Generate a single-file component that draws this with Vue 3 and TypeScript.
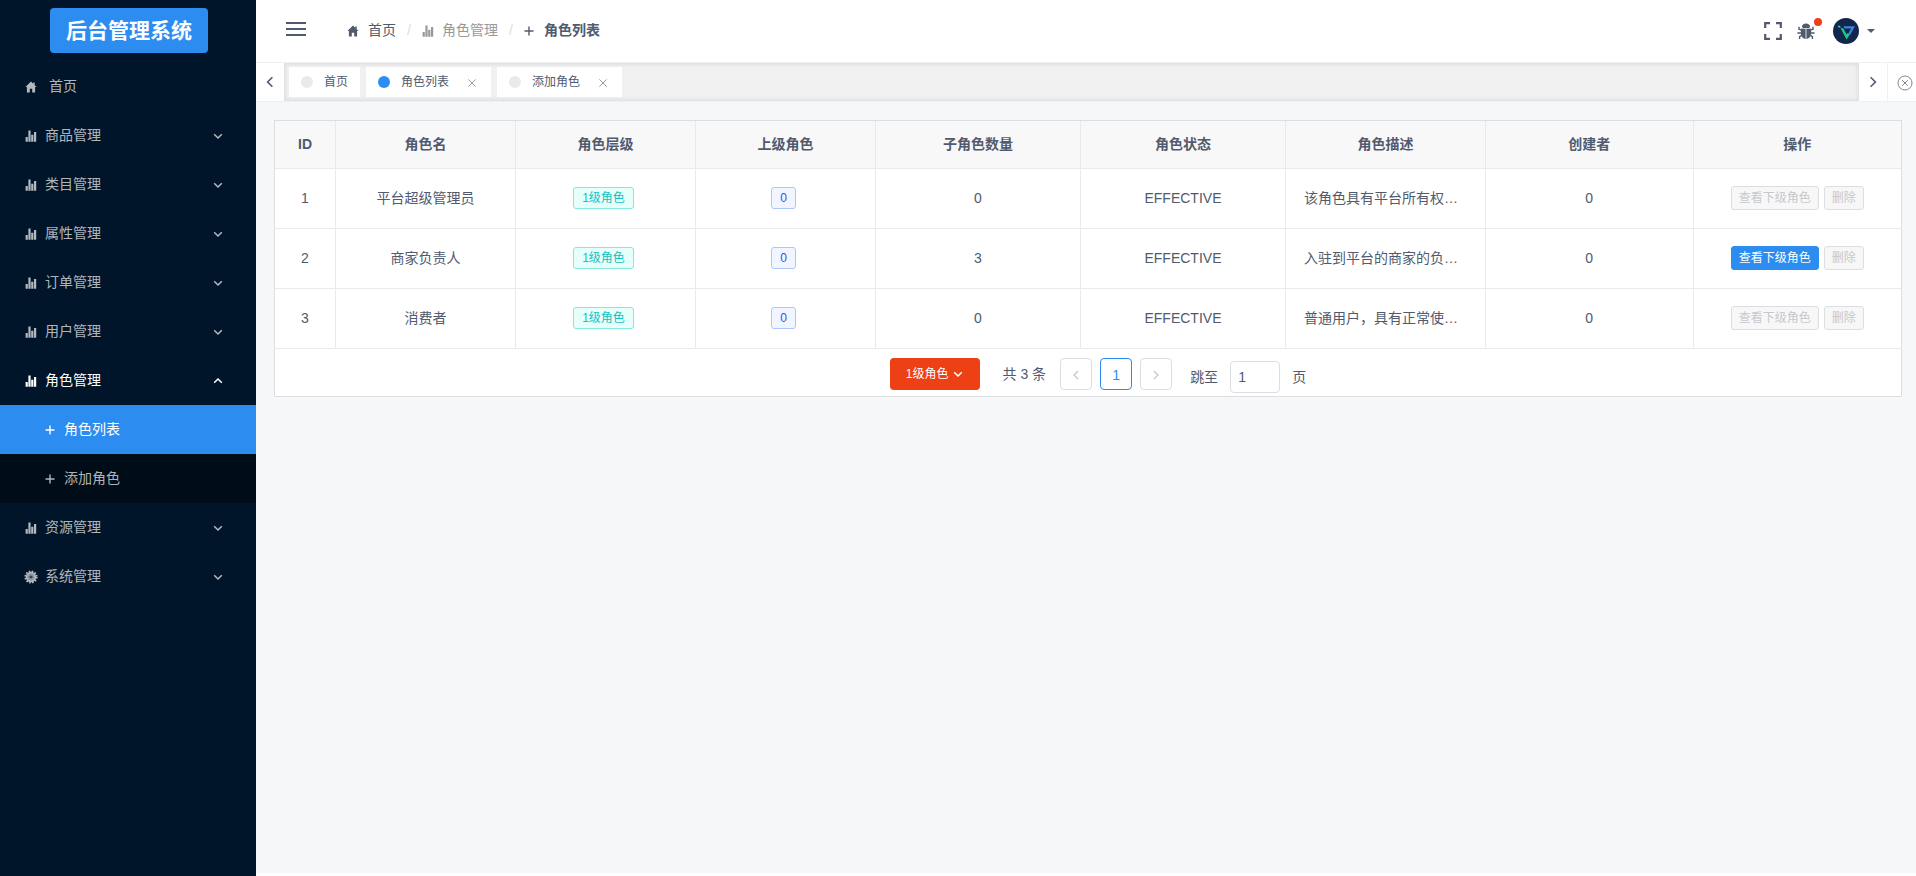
<script setup lang="ts">
import { ref } from 'vue'

interface MenuItem {
  label: string
  icon: 'chart' | 'gear'
  open?: boolean
  children?: string[]
}

interface Role {
  id: number
  name: string
  level: string
  parent: number
  children: number
  status: string
  description: string
  creator: number
}

const menu: MenuItem[] = [
  { label: '商品管理', icon: 'chart' },
  { label: '类目管理', icon: 'chart' },
  { label: '属性管理', icon: 'chart' },
  { label: '订单管理', icon: 'chart' },
  { label: '用户管理', icon: 'chart' },
  { label: '角色管理', icon: 'chart', open: true, children: ['角色列表', '添加角色'] },
  { label: '资源管理', icon: 'chart' },
  { label: '系统管理', icon: 'gear' },
]

const tabs = [
  { label: '首页', closable: false },
  { label: '角色列表', closable: true },
  { label: '添加角色', closable: true },
]
const current = ref('角色列表')

const columns = ['ID', '角色名', '角色层级', '上级角色', '子角色数量', '角色状态', '角色描述', '创建者', '操作']

const roles: Role[] = [
  { id: 1, name: '平台超级管理员', level: '1级角色', parent: 0, children: 0, status: 'EFFECTIVE', description: '该角色具有平台所有权…', creator: 0 },
  { id: 2, name: '商家负责人', level: '1级角色', parent: 0, children: 3, status: 'EFFECTIVE', description: '入驻到平台的商家的负…', creator: 0 },
  { id: 3, name: '消费者', level: '1级角色', parent: 0, children: 0, status: 'EFFECTIVE', description: '普通用户，具有正常使…', creator: 0 },
]

const page = ref('1')
</script>

<template>
  <svg class="defs" aria-hidden="true">
    <symbol id="i-home" viewBox="0 0 12 12">
      <path d="M6 .6 .4 6.1h1.5v5.3h2.9V7.8h2.4v3.6h2.9V6.1h1.5L9.7 4.2V1.4H8.3v1.4z" />
    </symbol>
    <symbol id="i-chart" viewBox="0 0 12 12">
      <path d="M.6 7h2.2v4.800H.6zM3.400.4h2.200v11.400H3.400zM6.200 4.800h2.200v7H6.200zM9 2h2.200v9.800H9z" />
    </symbol>
    <symbol id="i-gear" viewBox="0 0 14 14">
      <circle cx="7" cy="7" r="5.2" />
      <circle cx="7" cy="7" r="5.8" fill="none" stroke="currentColor" stroke-width="1.6" stroke-dasharray="1.6 1.44" />
      <path d="M7 3.2v7.6M3.4 5.8l7.2 2.4M4.8 10.1l4.4-6.2M4.8 3.9l4.4 6.2M3.4 8.2l7.2-2.4" stroke="#001529" stroke-width=".6" fill="none" opacity=".7" />
    </symbol>
    <symbol id="i-plus" viewBox="0 0 10 10">
      <path d="M5 .5v9M.5 5h9" fill="none" stroke="currentColor" stroke-width="1.4" />
    </symbol>
    <symbol id="i-down" viewBox="0 0 10 10">
      <path d="M1.2 3.2 5 7l3.8-3.8" fill="none" stroke="currentColor" stroke-width="1.5" />
    </symbol>
    <symbol id="i-left" viewBox="0 0 12 12">
      <path d="M8.4 1.2 3.6 6l4.8 4.8" fill="none" stroke="currentColor" stroke-width="1.6" />
    </symbol>
    <symbol id="i-cross" viewBox="0 0 10 10">
      <path d="m1.4 1.4 7.2 7.2m0-7.2-7.2 7.2" fill="none" stroke="currentColor" stroke-width="1" />
    </symbol>
  </svg>

  <div class="app">
    <aside class="sidebar">
      <h1 class="brand">后台管理系统</h1>
      <nav>
        <a class="item home" href="#"><svg class="ico"><use href="#i-home" /></svg><span>首页</span></a>
        <template v-for="m in menu" :key="m.label">
          <button class="item" :class="{ open: m.open }" type="button">
            <svg class="ico" :class="m.icon"><use :href="'#i-' + m.icon" /></svg>
            <span>{{ m.label }}</span>
            <svg class="arrow"><use href="#i-down" /></svg>
          </button>
          <div v-if="m.children" class="submenu">
            <a v-for="c in m.children" :key="c" class="item sub" :class="{ active: c === current }" href="#">
              <svg class="plus"><use href="#i-plus" /></svg><span>{{ c }}</span>
            </a>
          </div>
        </template>
      </nav>
    </aside>

    <div class="page">
      <header class="header">
        <button class="burger" type="button" aria-label="菜单">
          <svg viewBox="0 0 20 14"><path d="M0 1h20M0 7h20M0 13h20" stroke="currentColor" stroke-width="1.8" /></svg>
        </button>
        <nav class="crumbs">
          <a href="#"><svg class="ico"><use href="#i-home" /></svg><span class="first">首页</span></a>
          <i>/</i>
          <span class="muted"><svg class="ico"><use href="#i-chart" /></svg><span>角色管理</span></span>
          <i>/</i>
          <strong><svg class="plus"><use href="#i-plus" /></svg><span>角色列表</span></strong>
        </nav>
        <div class="tools">
          <button type="button" aria-label="全屏" class="full">
            <svg viewBox="0 0 18 18"><path d="M1.2 6V1.2H6M12 1.2h4.8V6M16.8 12v4.8H12M6 16.8H1.2V12" fill="none" stroke="currentColor" stroke-width="2.2" /></svg>
          </button>
          <button type="button" aria-label="错误日志" class="bug">
            <svg viewBox="0 0 18 18">
              <path d="M4.800 5C5 2.700 6.600 1.400 9 1.400s4 1.300 4.200 3.600L11.600 6.200H6.400z" />
              <path d="M4.200 6.400 8.600 7v10C5.500 16.600 3.800 14 3.800 11c0-1.700.1-3.200.4-4.600zM13.800 6.400 9.400 7v10c3.100-.4 4.800-3 4.800-6 0-1.700-.1-3.200-.4-4.600z" />
              <path d="M4.600 8.200 2 7.200V4.800M4 11H.4M4.600 13.400l-2 1.200V17M13.400 8.200 16 7.200V4.800M14 11h3.600M13.400 13.400l2 1.200V17" fill="none" stroke="currentColor" stroke-width="1.4" />
            </svg>
            <span class="dot"></span>
          </button>
          <button type="button" aria-label="用户" class="user">
            <svg class="avatar" viewBox="0 0 26 26">
              <circle cx="13" cy="13" r="13" fill="#13264b" />
              <path d="M10.400 8.200H22l-5.200 9.200-1.500-1.900 2.800-5.100h-6.500z" fill="#3b82e6" />
              <path d="M7.600 10.200h2.600l3.400 6.200 1.200-1.600 1.600 2.200-2.800 4.400z" fill="#1fc98f" />
              <path d="M4.600 7.800h2.200l1.200 1.800H5.600z" fill="#37d6c0" />
            </svg>
            <svg class="caret" viewBox="0 0 8 4"><path d="M0 0h8L4 4z" /></svg>
          </button>
        </div>
      </header>

      <div class="tabbar">
        <button class="edge" type="button" aria-label="向左"><svg><use href="#i-left" /></svg></button>
        <div class="tabs">
          <div v-for="t in tabs" :key="t.label" class="tab" :class="{ on: t.label === current }">
            <a href="#">{{ t.label }}</a>
            <button v-if="t.closable" type="button" aria-label="关闭"><svg><use href="#i-cross" /></svg></button>
          </div>
        </div>
        <button class="edge next" type="button" aria-label="向右"><svg><use href="#i-left" /></svg></button>
        <button class="edge closeall" type="button" aria-label="关闭标签">
          <svg viewBox="0 0 16 16"><circle cx="8" cy="8" r="7" /><path d="m5.2 5.2 5.600 5.600m0-5.600-5.600 5.600" /></svg>
        </button>
      </div>

      <main class="content">
        <section class="card">
          <table>
            <colgroup>
              <col class="w61"><col class="w180"><col class="w180"><col class="w180">
              <col class="w205"><col class="w205"><col class="w200"><col><col>
            </colgroup>
            <thead>
              <tr><th v-for="c in columns" :key="c" scope="col">{{ c }}</th></tr>
            </thead>
            <tbody>
              <tr v-for="r in roles" :key="r.id">
                <td>{{ r.id }}</td>
                <td>{{ r.name }}</td>
                <td><span class="tag cyan">{{ r.level }}</span></td>
                <td><span class="tag blue">{{ r.parent }}</span></td>
                <td>{{ r.children }}</td>
                <td>{{ r.status }}</td>
                <td class="desc">{{ r.description }}</td>
                <td>{{ r.creator }}</td>
                <td>
                  <div class="actions">
                    <button type="button" :disabled="r.children === 0">查看下级角色</button>
                    <button type="button" disabled>删除</button>
                  </div>
                </td>
              </tr>
            </tbody>
          </table>
          <footer class="pager">
            <button class="level" type="button">1级角色<svg><use href="#i-down" /></svg></button>
            <span class="total">共 3 条</span>
            <button class="num" type="button" disabled aria-label="上一页"><svg><use href="#i-left" /></svg></button>
            <button class="num cur" type="button">1</button>
            <button class="num fwd" type="button" disabled aria-label="下一页"><svg><use href="#i-left" /></svg></button>
            <label class="jump">跳至<input v-model="page" type="text">页</label>
          </footer>
        </section>
      </main>
    </div>
  </div>
</template>

<style>
body {
  margin: 0;
  background: #fff;
}
</style>

<style scoped>
* {
  box-sizing: border-box;
}
.defs {
  position: absolute;
  width: 0;
  height: 0;
}
svg {
  display: block;
  flex: none;
  fill: currentColor;
}
button {
  font: inherit;
  color: inherit;
  padding: 0;
  border: 0;
  background: none;
}
a {
  color: inherit;
  text-decoration: none;
}
.app {
  display: flex;
  min-height: 100vh;
  font-family: 'Liberation Sans', 'Noto Sans CJK SC', sans-serif;
  font-size: 14px;
  line-height: 20px;
  color: #515a6e;
}

/* sidebar */
.sidebar {
  flex: 0 0 256px;
  background: #001529;
  color: rgba(255, 255, 255, 0.7);
}
.brand {
  width: 158px;
  margin: 8px 0 9px 50px;
  border-radius: 4px;
  background: #2d8cf0;
  color: #fff;
  font-size: 21px;
  line-height: 45px;
  text-align: center;
}
.item {
  display: flex;
  align-items: center;
  gap: 8px;
  width: 100%;
  height: 49px;
  padding: 0 33px 2px 25px;
  text-align: left;
}
.item svg {
  margin-top: 2px;
}
.ico {
  width: 12px;
  height: 12px;
}
.gear {
  width: 14px;
  height: 14px;
  margin: 0 -1px;
}
.home {
  gap: 12px;
}
.item .arrow {
  width: 10px;
  height: 10px;
  margin-left: auto;
}
.open {
  color: #fff;
}
.open .arrow {
  transform: rotate(180deg);
}
.submenu {
  background: #000c17;
}
.sub {
  padding-left: 45px;
  gap: 9px;
}
.active {
  background: #2d8cf0;
  color: #fff;
}
.plus {
  width: 10px;
  height: 10px;
}

/* header */
.page {
  flex: 1;
  min-width: 0;
  display: flex;
  flex-direction: column;
}
.header {
  display: flex;
  align-items: center;
  height: 62px;
  padding: 0 41px 0 30px;
}
.burger svg {
  width: 20px;
  height: 14px;
  margin-bottom: 4px;
}
.crumbs {
  display: flex;
  align-items: center;
  margin-left: 41px;
  padding-bottom: 2px;
}
.crumbs > a,
.crumbs > span,
.crumbs > strong {
  display: flex;
  align-items: center;
  gap: 8px;
}
.crumbs svg {
  margin-top: 2px;
}
.crumbs .first {
  margin-left: 1px;
}
.crumbs > strong {
  gap: 10px;
}
.crumbs i {
  width: 26px;
  font-style: normal;
  text-align: center;
  color: #dcdee2;
}
.crumbs .muted {
  color: #999;
}
.tools {
  display: flex;
  align-items: center;
  margin-left: auto;
}
.full svg,
.bug svg {
  width: 18px;
  height: 18px;
}
.bug {
  position: relative;
  margin: 0 18px 0 15px;
}
.dot {
  position: absolute;
  top: -4px;
  right: -7px;
  width: 8px;
  height: 8px;
  border-radius: 50%;
  background: #ed4014;
}
.user {
  display: flex;
  align-items: center;
  gap: 8px;
}
.avatar {
  width: 26px;
  height: 26px;
}
.caret {
  width: 8px;
  height: 4px;
}

/* opened pages */
.tabbar {
  display: flex;
  height: 40px;
  border-top: 1px solid #f0f0f0;
  border-bottom: 1px solid #f0f0f0;
  overflow: hidden;
}
.edge {
  flex: none;
  display: grid;
  place-items: center;
  width: 28px;
  background: #fff;
}
.edge svg {
  width: 12px;
  height: 12px;
}
.next svg,
.fwd svg {
  transform: scaleX(-1);
}
.closeall {
  width: 29px;
  padding: 2px 0 0 6px;
  border-left: 1px solid #f0f0f0;
}
.closeall svg {
  width: 16px;
  height: 16px;
  fill: none;
  stroke: #808695;
}
.tabs {
  flex: 1;
  display: flex;
  align-items: center;
  gap: 6px;
  padding: 0 5px;
  background: #f0f0f0;
  box-shadow: inset 0 0 3px 2px rgba(100, 100, 100, 0.1);
}
.tab {
  display: flex;
  align-items: center;
  height: 30px;
  padding: 0 12px;
  background: #fff;
  font-size: 12px;
}
.tab::before {
  content: '';
  width: 12px;
  height: 12px;
  margin-right: 11px;
  border-radius: 50%;
  background: #e8eaec;
}
.tab.on::before {
  background: #2d8cf0;
}
.tab button {
  margin-left: 18px;
}
.tab button svg {
  width: 10px;
  height: 10px;
  margin: 2px 2px 0 0;
  color: #999;
}

/* table */
.content {
  flex: 1;
  margin-bottom: 3px;
  padding: 18px 14px 18px 18px;
  background: #f5f7f9;
}
.card {
  border: 1px solid #dcdee2;
  background: #fff;
}
table {
  width: 100%;
  table-layout: fixed;
  border-collapse: separate;
  border-spacing: 0;
}
.w61 {
  width: 61px;
}
.w180 {
  width: 180px;
}
.w200 {
  width: 200px;
}
.w205 {
  width: 205px;
}
th,
td {
  padding: 0 0 2px;
  border-right: 1px solid #e8eaec;
  border-bottom: 1px solid #e8eaec;
  text-align: center;
}
th:last-child,
td:last-child {
  border-right: 0;
}
th {
  height: 48px;
  background: #f8f8f9;
}
td {
  height: 60px;
}
.desc {
  padding: 0 18px 2px;
  text-align: left;
  white-space: nowrap;
  overflow: hidden;
}
.tag {
  display: inline-block;
  height: 22px;
  margin-right: 4px;
  padding: 0 8px;
  border: 1px solid #87e8de;
  border-radius: 3px;
  background: #e6fffb;
  color: #13c2c2;
  font-size: 12px;
  line-height: 20px;
  vertical-align: middle;
}
.tag.blue {
  border-color: #adc6ff;
  background: #f0f5ff;
  color: #2f54eb;
}
.actions {
  display: flex;
  justify-content: center;
  gap: 5px;
}
.actions button {
  height: 24px;
  padding: 0 7px;
  border: 1px solid #2d8cf0;
  border-radius: 3px;
  background: #2d8cf0;
  color: #fff;
  font-size: 12px;
}
.actions button:disabled {
  border-color: #dcdee2;
  background: #f7f7f7;
  color: #c5c8ce;
}

/* pagination */
.pager {
  display: flex;
  justify-content: center;
  align-items: flex-start;
  height: 47px;
  padding: 9px 0 0 20px;
  line-height: 32px;
}
.level {
  display: flex;
  align-items: center;
  gap: 4px;
  height: 32px;
  padding: 0 16px;
  border-radius: 4px;
  background: #ed4014;
  color: #fff;
  font-size: 12px;
}
.level svg {
  width: 10px;
  height: 10px;
  margin-right: 1px;
}
.total {
  margin: 0 6px 0 23px;
}
.num {
  display: grid;
  place-items: center;
  width: 32px;
  height: 32px;
  margin-left: 8px;
  border: 1px solid #dcdee2;
  border-radius: 4px;
  background: #fff;
}
.num svg {
  width: 10px;
  height: 10px;
  margin-top: 2px;
}
.num:disabled {
  color: #c5c8ce;
}
.cur {
  border-color: #2d8cf0;
  color: #2d8cf0;
}
.jump {
  display: flex;
  align-items: center;
  gap: 12px;
  margin: 3px 0 0 18px;
}
.jump input {
  width: 50px;
  height: 32px;
  padding: 0 7px;
  border: 1px solid #dcdee2;
  border-radius: 4px;
  background: #fff;
  color: inherit;
  font: inherit;
}
</style>
